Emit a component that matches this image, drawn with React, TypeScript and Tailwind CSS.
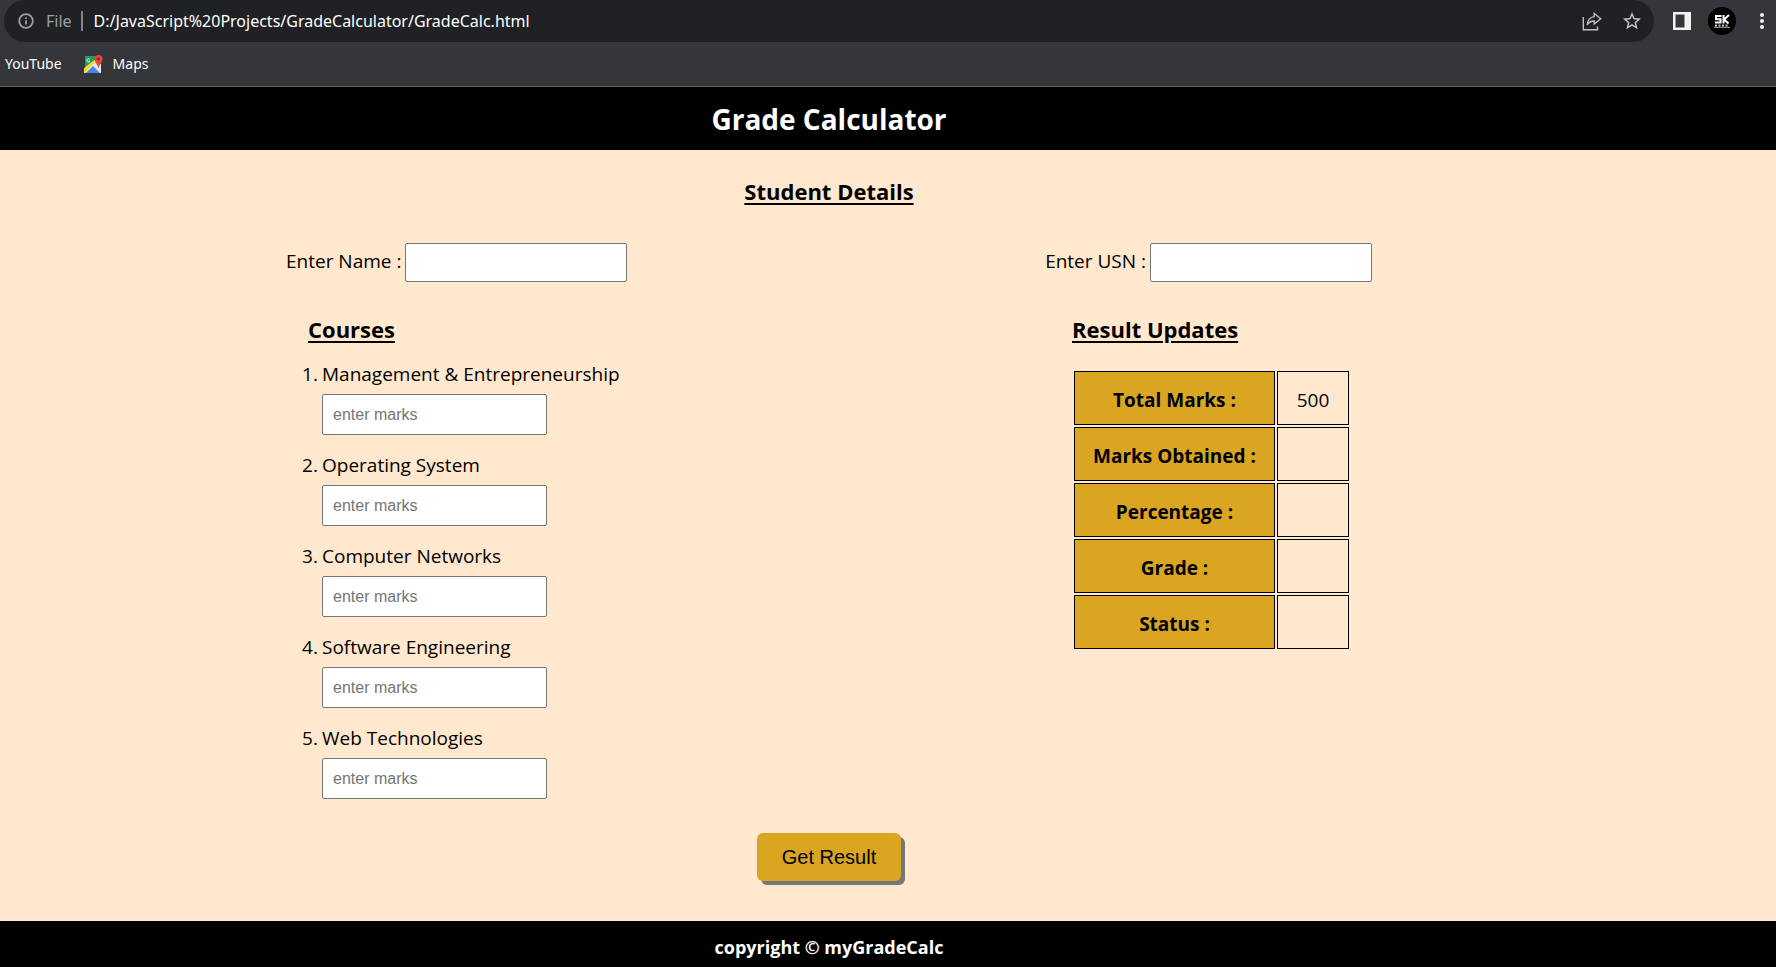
import { useState } from 'react';

const courses = [
  'Management & Entrepreneurship',
  'Operating System',
  'Computer Networks',
  'Software Engineering',
  'Web Technologies',
];

function AddressBar() {
  return (
    <div className="flex h-[42px] items-center pl-1">
      <div className="flex h-[42px] grow items-center rounded-full bg-[#202124] pl-[14px] pr-3">
        <button type="button" aria-label="View site information">
          <svg width="16" height="16" viewBox="0 0 16 16" fill="none" stroke="#9aa0a6" strokeWidth="1.8">
            <circle cx="8" cy="8" r="6.8" />
            <path d="M8 7.2v4.2M8 4.2v1.7" />
          </svg>
        </button>
        <span className="ml-3 text-[16px] leading-5 text-[#9aa0a6]">File</span>
        <span className="ml-[9px] mr-[11px] h-5 w-[2px] bg-[#80868b]" />
        <span className="text-[16px] leading-5 text-white">
          D:/JavaScript%20Projects/GradeCalculator/GradeCalc.html
        </span>
        <button type="button" aria-label="Share this page" className="ml-auto">
          <svg width="20" height="20" viewBox="0 0 20 20" fill="none" stroke="#bdc1c6" strokeWidth="1.4">
            <path d="M1.3 6v12.800h14.200V15.500" />
            <path d="M12.200 2.500l6.500 5.300-6.500 5.200V10c-3.200.1-5.300 1.200-7 3.800.4-4.600 2.800-7.600 7-8.200z" strokeLinejoin="miter" />
          </svg>
        </button>
        <button type="button" aria-label="Bookmark this page" className="ml-5">
          <svg width="20" height="20" viewBox="1 1 22 22" fill="#c4c7cb">
            <path d="M22 9.240l-7.190-.62L12 2 9.190 8.630 2 9.240l5.460 4.730L5.820 21 12 17.270 18.180 21l-1.630-7.030L22 9.240zM12 15.400l-3.760 2.270 1-4.280-3.320-2.880 4.380-.38L12 6.100l1.710 4.040 4.380.38-3.320 2.880 1 4.280L12 15.400z" />
          </svg>
        </button>
      </div>
      <div className="flex items-center pl-[19px] pr-[6px]">
        <button type="button" aria-label="Side panel">
          <svg width="18" height="18" viewBox="0 0 18 18">
            <path fill="#f1f3f4" fillRule="evenodd" d="M0 0h18v18H0zM2.500 2.500v13h9v-13z" />
          </svg>
        </button>
        <button type="button" aria-label="Profile" className="ml-[17px]">
          <svg width="28" height="28" viewBox="0 0 28 28">
            <circle cx="14" cy="14" r="14" fill="#000" />
            <g fill="none" stroke="#fff" strokeWidth="2">
              <path d="M13.500 9H8v3.200h4.500v3.300H7M15.500 8v8.500M21 8l-5 4.500 4.500 4" />
            </g>
            <path d="M7 18.500h14" stroke="#ccc" strokeWidth="2" strokeDasharray="2 1.500" />
            <path d="M6 20.300h16" stroke="#aaa" />
          </svg>
        </button>
        <button type="button" aria-label="Menu" className="ml-[18px]">
          <svg width="16" height="18" viewBox="0 0 16 18" fill="#f1f3f4">
            <circle cx="8" cy="3" r="2" />
            <circle cx="8" cy="9" r="2" />
            <circle cx="8" cy="15" r="2" />
          </svg>
        </button>
      </div>
    </div>
  );
}

function MapsIcon() {
  return (
    <svg width="19" height="18" viewBox="0 0 19 18">
      <path d="M1 1h12v6L1 17z" fill="#1e9e58" />
      <path d="M0 13.500L10.500 5l2.500 3L3 18H0z" fill="#fdd835" />
      <path d="M0 14.500L9.500 7l7.500 2v9H3z" fill="#e8eaed" />
      <path d="M0 13.500L9 6l1.500 2L1.500 17.500H0z" fill="#fdd835" />
      <path d="M2 18l7-7 7 7z" fill="#4285f4" />
      <path d="M5.800 4.300A1.700 1.700 0 1 0 6 6.200H4.500" fill="none" stroke="#fff" strokeWidth="0.9" />
      <path d="M14.500 0a4 4 0 0 1 4 4c0 3-3 5-4 9.500-1-4.500-4-6.500-4-9.500a4 4 0 0 1 4-4z" fill="#e8453c" />
      <circle cx="14.500" cy="4" r="1.400" fill="#8c1f18" />
    </svg>
  );
}

function BookmarksBar() {
  return (
    <nav className="flex h-[45px] items-center border-b border-[#5f6064] pb-px pl-[5px] text-[14px] text-white">
      <a href="#youtube">YouTube</a>
      <a href="#maps" className="ml-[22px] flex items-center gap-[10px]">
        <MapsIcon />
        Maps
      </a>
    </nav>
  );
}

function TextField({ id, label }: { id: string; label: string }) {
  return (
    <div className="flex items-center gap-1">
      <label htmlFor={id} className="pb-1">
        {label}
      </label>
      <input
        id={id}
        className="h-[39px] w-[222px] rounded-[2px] border border-[#767676] bg-white px-2 font-['Liberation_Sans',sans-serif] text-[16px]"
      />
    </div>
  );
}

export default function App() {
  const [marks, setMarks] = useState<string[]>(courses.map(() => ''));
  const [result, setResult] = useState(['', '', '', '']);

  const calculate = () => {
    const total = marks.reduce((sum, mark) => sum + Number(mark || 0), 0);
    const percent = total / 5;
    const grade = percent >= 80 ? 'A' : percent >= 60 ? 'B' : percent >= 40 ? 'C' : 'F';
    setResult([String(total), `${percent}%`, grade, percent >= 40 ? 'Pass' : 'Fail']);
  };

  const rows = [
    ['Total Marks :', '500'],
    ['Marks Obtained :', result[0]],
    ['Percentage :', result[1]],
    ['Grade :', result[2]],
    ['Status :', result[3]],
  ];

  return (
    <div className="flex min-h-screen flex-col bg-[#ffe8cd] font-['Open_Sans',sans-serif] text-black">
      <div className="bg-[#35363a] font-['Noto_Sans',sans-serif]">
        <AddressBar />
        <BookmarksBar />
      </div>
      <header className="flex h-[63px] items-center justify-center bg-black pr-[118px] text-white">
        <h1 className="text-[28px] font-bold leading-10">Grade Calculator</h1>
      </header>
      <main className="grow pr-[118px] text-[19px] leading-7">
        <h2 className="pt-[25px] text-center text-[22px] font-bold leading-8 underline decoration-2 underline-offset-3">
          Student Details
        </h2>
        <div className="flex justify-between px-[286px] pt-9">
          <TextField id="student-name" label="Enter Name :" />
          <TextField id="student-usn" label="Enter USN :" />
        </div>
        <div className="flex justify-between pl-[302px] pr-[307px] pt-[31px]">
          <section>
            <h2 className="pl-[6px] text-[22px] font-bold leading-8 underline decoration-2 underline-offset-3">Courses</h2>
            <ol className="flex flex-col gap-4 pt-[15px]">
              {courses.map((course, i) => (
                <li key={course} className="flex">
                  <span className="w-5">{i + 1}.</span>
                  <div className="flex flex-col gap-[6px]">
                    <label htmlFor={`course-${i}`}>{course}</label>
                    <input
                      id={`course-${i}`}
                      placeholder="enter marks"
                      value={marks[i]}
                      onChange={(e) => setMarks(marks.map((m, j) => (j === i ? e.target.value : m)))}
                      className="h-[41px] w-[225px] rounded-[2px] border border-[#767676] bg-white px-[10px] font-['Liberation_Sans',sans-serif] text-[16px] placeholder:text-[#757575]"
                    />
                  </div>
                </li>
              ))}
            </ol>
          </section>
          <section>
            <h2 className="text-[22px] font-bold leading-8 underline decoration-2 underline-offset-3">Result Updates</h2>
            <table className="mt-6 border-separate border-spacing-[2px]">
              <tbody>
                {rows.map(([label, value]) => (
                  <tr key={label}>
                    <th scope="row" className="h-[54px] w-[201px] border border-black bg-[#daa520] p-0 pt-1 font-bold">
                      {label}
                    </th>
                    <td className="w-[72px] border border-black p-0 pt-1 text-center">{value}</td>
                  </tr>
                ))}
              </tbody>
            </table>
          </section>
        </div>
        <div className="flex justify-center pb-10 pt-[34px]">
          <button
            type="button"
            onClick={calculate}
            className="h-12 w-36 rounded-[6px] bg-[#daa520] font-['Liberation_Sans',sans-serif] text-[20px] shadow-[4px_4px_0_#777777]"
          >
            Get Result
          </button>
        </div>
      </main>
      <footer className="flex h-[46px] items-center justify-center bg-black pr-[118px] pt-[6px] text-[18px] font-bold text-white">
        copyright © myGradeCalc
      </footer>
    </div>
  );
}
